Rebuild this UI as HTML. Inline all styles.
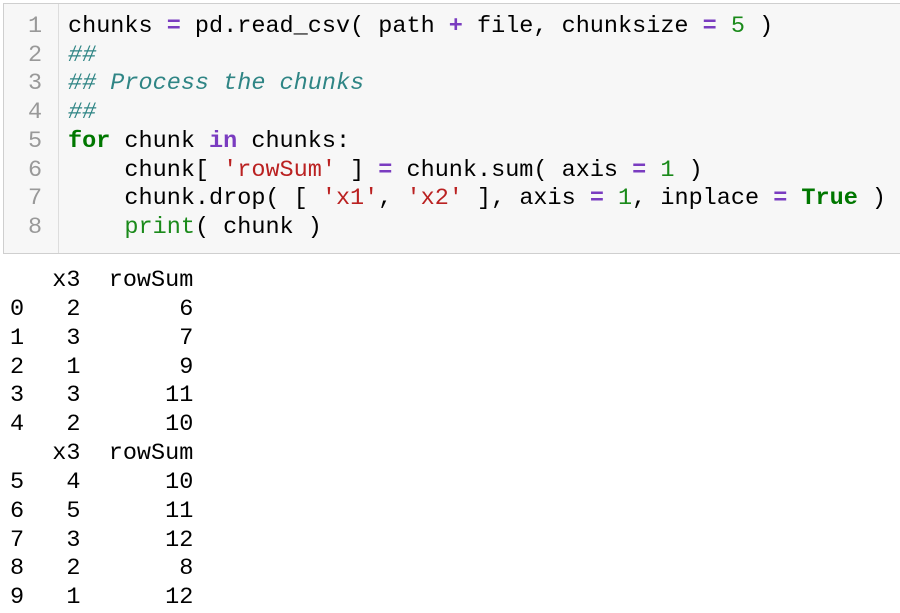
<!DOCTYPE html>
<html><head><style>
body{margin:0;width:900px;height:604px;background:#fff;overflow:hidden;position:relative;font-family:"Liberation Mono",monospace;}
.box{position:absolute;left:3px;top:3px;width:900px;height:249px;background:#f7f7f7;border:1px solid #cfcfcf;border-right:none;}
.gut{position:absolute;left:58px;top:4px;width:1px;height:249px;background:#ddd;}
.l{position:absolute;font-size:23.5px;line-height:29px;white-space:pre;color:#000;}
.n{color:#999;}
.c{color:#2f8585;font-style:italic;}
.o{color:#7a3cc0;font-weight:bold;}
.m{color:#1a8a1a;}
.k{color:#007700;font-weight:bold;}
.s{color:#ba2121;}
.out{position:absolute;left:10px;top:267px;font-size:23.5px;line-height:28.85px;white-space:pre;color:#000;}
</style></head><body>
<div class="box"></div><div class="gut"></div>
<div class="l n" style="left:28px;top:13px;line-height:28.7px">1
2
3
4
5
6
7
8</div>
<div class="l" style="left:68px;top:13px;line-height:28.7px">chunks <span class="o">=</span> pd.read_csv( path <span class="o">+</span> file, chunksize <span class="o">=</span> <span class="m">5</span> )
<span class="c">##</span>
<span class="c">## Process the chunks</span>
<span class="c">##</span>
<span class="k">for</span> chunk <span class="o">in</span> chunks:
    chunk[ <span class="s">'rowSum'</span> ] <span class="o">=</span> chunk.sum( axis <span class="o">=</span> <span class="m">1</span> )
    chunk.drop( [ <span class="s">'x1'</span>, <span class="s">'x2'</span> ], axis <span class="o">=</span> <span class="m">1</span>, inplace <span class="o">=</span> <span class="k">True</span> )
    <span class="m">print</span>( chunk )</div>
<div class="out">   x3  rowSum
0   2       6
1   3       7
2   1       9
3   3      11
4   2      10
   x3  rowSum
5   4      10
6   5      11
7   3      12
8   2       8
9   1      12</div>
</body></html>
